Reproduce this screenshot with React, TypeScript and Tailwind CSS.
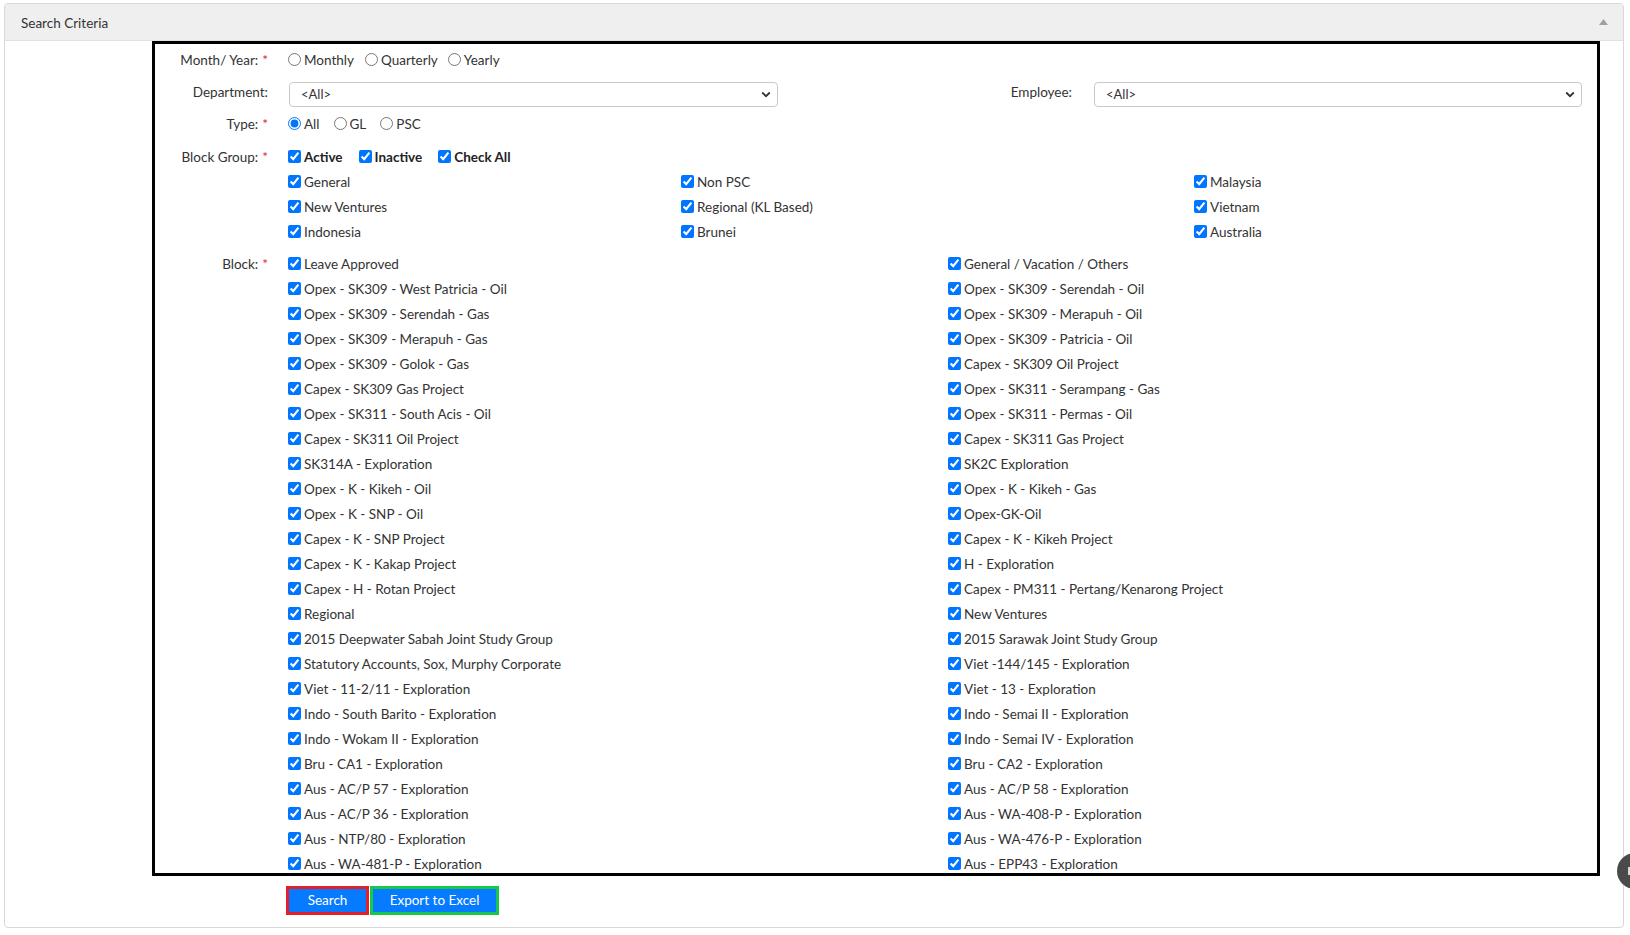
import React from "react";

const leftBlocks = [
  "Leave Approved",
  "Opex - SK309 - West Patricia - Oil",
  "Opex - SK309 - Serendah - Gas",
  "Opex - SK309 - Merapuh - Gas",
  "Opex - SK309 - Golok - Gas",
  "Capex - SK309 Gas Project",
  "Opex - SK311 - South Acis - Oil",
  "Capex - SK311 Oil Project",
  "SK314A - Exploration",
  "Opex - K - Kikeh - Oil",
  "Opex - K - SNP - Oil",
  "Capex - K - SNP Project",
  "Capex - K - Kakap Project",
  "Capex - H - Rotan Project",
  "Regional",
  "2015 Deepwater Sabah Joint Study Group",
  "Statutory Accounts, Sox, Murphy Corporate",
  "Viet - 11-2/11 - Exploration",
  "Indo - South Barito - Exploration",
  "Indo - Wokam II - Exploration",
  "Bru - CA1 - Exploration",
  "Aus - AC/P 57 - Exploration",
  "Aus - AC/P 36 - Exploration",
  "Aus - NTP/80 - Exploration",
  "Aus - WA-481-P - Exploration",
];

const rightBlocks = [
  "General / Vacation / Others",
  "Opex - SK309 - Serendah - Oil",
  "Opex - SK309 - Merapuh - Oil",
  "Opex - SK309 - Patricia - Oil",
  "Capex - SK309 Oil Project",
  "Opex - SK311 - Serampang - Gas",
  "Opex - SK311 - Permas - Oil",
  "Capex - SK311 Gas Project",
  "SK2C Exploration",
  "Opex - K - Kikeh - Gas",
  "Opex-GK-Oil",
  "Capex - K - Kikeh Project",
  "H - Exploration",
  "Capex - PM311 - Pertang/Kenarong Project",
  "New Ventures",
  "2015 Sarawak Joint Study Group",
  "Viet -144/145 - Exploration",
  "Viet - 13 - Exploration",
  "Indo - Semai II - Exploration",
  "Indo - Semai IV - Exploration",
  "Bru - CA2 - Exploration",
  "Aus - AC/P 58 - Exploration",
  "Aus - WA-408-P - Exploration",
  "Aus - WA-476-P - Exploration",
  "Aus - EPP43 - Exploration",
];

function Cb({ label, bold }: { label: string; bold?: boolean }) {
  return (
    <label className="flex items-center h-[25px] whitespace-nowrap">
      <input
        type="checkbox"
        defaultChecked
        className="w-[13px] h-[13px] mr-[3px] accent-[#0075ff] shrink-0"
      />
      <span className={"pt-[2px] " + (bold ? "font-bold text-[#222]" : "")}>{label}</span>
    </label>
  );
}

function Radio({ label, checked, className }: { label: string; checked?: boolean; className?: string }) {
  return (
    <label className={"flex items-center h-[25px] whitespace-nowrap " + (className || "")}>
      <input
        type="radio"
        name="r"
        defaultChecked={checked}
        className="w-[13px] h-[13px] mr-[3px] accent-[#0075ff] shrink-0"
      />
      <span className="pt-[2px]">{label}</span>
    </label>
  );
}

function Label({ text, req }: { text: string; req?: boolean }) {
  return (
    <div className="w-[113px] shrink-0 h-[25px] pt-[2px] flex items-center justify-end whitespace-nowrap">
      {text}
      {req && <span className="text-[#e3242b] ml-[4px]">*</span>}
    </div>
  );
}

function Select({ w }: { w: string }) {
  return (
    <div className={w + " h-[25px] border border-[#c9c9c9] rounded-[4px] flex items-center justify-between pl-[11px] pr-[6px] text-[13px] text-[#333] bg-white"}>
      <span className="pt-[1px]">&lt;All&gt;</span>
      <svg width="10" height="7" viewBox="0 0 10 7">
        <polyline points="1.2,1.5 5,5.2 8.8,1.5" fill="none" stroke="#333" strokeWidth="1.8" />
      </svg>
    </div>
  );
}

export default function App() {
  return (
    <div className="relative w-[1630px] h-[935px] bg-white pt-[3px] pl-[4px] overflow-hidden font-[Lato,sans-serif] text-[13.5px] text-[#333]">
      <div className="relative w-[1620px] h-[925px] border border-[#d8d8d8] rounded-[4px] flex flex-col overflow-hidden bg-white">
        <div className="h-[37px] shrink-0 bg-[#efefef] border-b border-[#e2e2e2] flex items-center justify-between pl-[16px] pr-[15px]">
          <span className="text-[#333] pt-[2px]">Search Criteria</span>
          <svg width="9" height="6" viewBox="0 0 9 6">
            <polygon points="0,6 4.5,0 9,6" fill="#a0a0a0" />
          </svg>
        </div>
        <div className="pl-[147px]">
          <div className="w-[1448px] h-[835px] border-[3px] border-black overflow-hidden pt-[3px]">
            {/* Month/Year */}
            <div className="flex h-[25px]">
              <Label text="Month/ Year:" req />
              <div className="ml-[20px] flex">
                <Radio label="Monthly" className="mr-[11px]" />
                <Radio label="Quarterly" className="mr-[10px]" />
                <Radio label="Yearly" />
              </div>
            </div>
            {/* Department / Employee */}
            <div className="flex mt-[10px] h-[25px]">
              <div className="w-[113px] shrink-0 text-right -mt-[2px] leading-[25px]">Department:</div>
              <div className="ml-[21px]">
                <Select w="w-[489px]" />
              </div>
              <div className="w-[294px] shrink-0 text-right -mt-[2px] leading-[25px]">Employee:</div>
              <div className="ml-[22px]">
                <Select w="w-[488px]" />
              </div>
            </div>
            {/* Type */}
            <div className="flex mt-[4px] h-[25px]">
              <Label text="Type:" req />
              <div className="ml-[20px] flex">
                <Radio label="All" checked className="mr-[14px]" />
                <Radio label="GL" className="mr-[14px]" />
                <Radio label="PSC" />
              </div>
            </div>
            {/* Block Group */}
            <div className="flex mt-[8px]">
              <Label text="Block Group:" req />
              <div className="ml-[20px] flex flex-col">
                <div className="flex gap-[16px]">
                  <Cb label="Active" bold />
                  <Cb label="Inactive" bold />
                  <Cb label="Check All" bold />
                </div>
                <div className="grid grid-cols-[393px_513px_200px]">
                  <Cb label="General" />
                  <Cb label="Non PSC" />
                  <Cb label="Malaysia" />
                  <Cb label="New Ventures" />
                  <Cb label="Regional (KL Based)" />
                  <Cb label="Vietnam" />
                  <Cb label="Indonesia" />
                  <Cb label="Brunei" />
                  <Cb label="Australia" />
                </div>
              </div>
            </div>
            {/* Block */}
            <div className="flex mt-[7px]">
              <Label text="Block:" req />
              <div className="ml-[20px] grid grid-cols-[660px_500px]">
                {leftBlocks.map((l, i) => (
                  <React.Fragment key={i}>
                    <Cb label={l} />
                    <Cb label={rightBlocks[i]} />
                  </React.Fragment>
                ))}
              </div>
            </div>
          </div>
          <div className="flex mt-[10px] ml-[134px]">
            <button className="w-[83px] h-[29px] border-[3px] border-[#e3202a] bg-[#077bff] text-white text-[13.5px] flex items-center justify-center">
              Search
            </button>
            <button className="ml-[1px] w-[129px] h-[29px] border-[3px] border-[#18c84a] bg-[#077bff] text-white text-[13.5px] flex items-center justify-center">
              Export to Excel
            </button>
          </div>
        </div>
      </div>
      <div className="absolute left-[1617px] top-[853px] w-[36px] h-[36px] rounded-full bg-[#4a4a4a] flex items-center">
        <span className="ml-[11px] w-[2px] h-[8px] bg-white/80" />
      </div>
    </div>
  );
}
